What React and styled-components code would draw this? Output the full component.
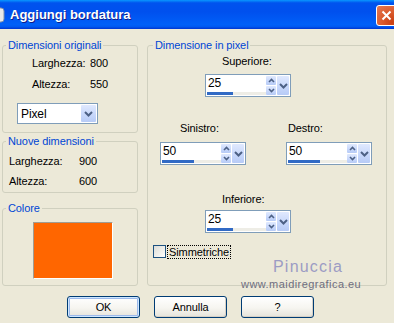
import React from 'react';
import styled, { createGlobalStyle } from 'styled-components';

const GlobalStyle = createGlobalStyle`
  html, body { margin: 0; padding: 0; }
  body {
    width: 394px;
    height: 323px;
    overflow: hidden;
    background: #ECE9D8;
    font-family: "Liberation Sans", Arial, sans-serif;
    font-size: 11px;
    letter-spacing: -0.1px;
    color: #000;
  }
`;

const Window = styled.div`
  width: 394px;
  height: 323px;
  display: flex;
  flex-direction: column;
  background: #ECE9D8;
  overflow: hidden;
`;

const TitleBar = styled.div`
  height: 29px;
  flex-shrink: 0;
  display: flex;
  align-items: center;
  background: linear-gradient(180deg, #0997FF 0%, #0053EE 10%, #0050EE 40%, #0060F8 85%, #0058F0 93%, #003DD7 97%, #003DD7 100%);
`;

const AppIcon = styled.svg`
  width: 16px;
  height: 16px;
  margin-left: -11px;
  margin-right: 5px;
  flex-shrink: 0;
`;

const Title = styled.span`
  flex: 1;
  color: #fff;
  font-family: "Liberation Sans", Arial, sans-serif;
  font-weight: bold;
  font-size: 13px;
  letter-spacing: 0;
  text-shadow: 1px 1px 0 #0F1C8A;
`;

const CloseButton = styled.div`
  width: 21px;
  height: 21px;
  margin-right: -3px;
  margin-top: 1px;
  box-sizing: border-box;
  border: 1px solid #fff;
  border-radius: 3px;
  background: radial-gradient(circle at 80% 85%, #C94013 0%, #DA5A2C 45%, #E67A55 100%);
  display: flex;
  align-items: center;
  justify-content: center;
  flex-shrink: 0;
`;

const Body = styled.div`
  flex: 1;
  position: relative;
  display: flex;
  flex-direction: column;
  padding: 10px 0 0 2px;
`;

const Columns = styled.div`
  display: flex;
  gap: 9px;
`;

const LeftColumn = styled.div`
  width: 136px;
  display: flex;
  flex-direction: column;
`;

const Group = styled.fieldset`
  margin: ${p => p.$top || 0}px 0 0 0;
  padding: 0;
  border: 1px solid #D0D0BF;
  border-radius: 3px;
  min-width: 0;
  box-sizing: border-box;
  width: ${p => p.$w}px;
`;

const GroupBody = styled.div`
  padding: ${p => p.$pad};
  display: flex;
  flex-direction: column;
  align-items: flex-start;
`;

const Legend = styled.legend`
  margin-left: ${p => p.$offset || 3}px;
  padding: 0 2px;
  color: #0046D5;
  font-size: 11px;
  line-height: 13px;
`;

const InfoRow = styled.div`
  display: grid;
  grid-template-columns: ${p => p.$col}px auto;
  height: ${p => p.$h}px;
  margin-left: ${p => p.$indent || 0}px;
  align-items: center;
`;

const Select = styled.div`
  width: 81px;
  height: 21px;
  box-sizing: border-box;
  margin: 9px 0 0 ${p => p.$left}px;
  border: 1px solid #7F9DB9;
  background: #fff;
  display: flex;
  align-items: center;
`;

const SelectText = styled.span`
  flex: 1;
  padding-left: 3px;
  font-size: 12px;
`;

const DropButton = styled.div`
  width: ${p => p.$w || 15}px;
  align-self: stretch;
  margin: 1px;
  border-radius: 1px;
  background: linear-gradient(180deg, #E0E9FE 0%, #C8D8FB 55%, #B7CBF6 100%);
  display: flex;
  align-items: center;
  justify-content: center;
`;

const Swatch = styled.div`
  width: 80px;
  height: 57px;
  box-sizing: border-box;
  margin: 7px 0 0 30px;
  background: #FF6600;
  border-top: 1px solid #A09C92;
  border-left: 1px solid #A09C92;
  border-right: 1px solid #fff;
  border-bottom: 1px solid #fff;
`;

const SpinRow = styled.div`
  display: flex;
  margin-top: ${p => p.$top}px;
`;

const SpinBlock = styled.div`
  display: flex;
  flex-direction: column;
  margin-left: ${p => p.$left}px;
`;

const SpinLabel = styled.span`
  line-height: 13px;
  padding-left: ${p => p.$indent}px;
  margin-bottom: ${p => p.$gap}px;
`;

const SpinField = styled.div`
  width: 86px;
  height: 23px;
  box-sizing: border-box;
  border: 1px solid #7F9DB9;
  background: #fff;
  display: flex;
`;

const Entry = styled.div`
  flex: 1;
  display: flex;
  flex-direction: column;
`;

const EntryValue = styled.span`
  flex: 1;
  padding-left: 2px;
  font-size: 12px;
  line-height: 17px;
`;

const Track = styled.div`
  height: 3px;
  margin: 0 0 1px 1px;
  background: #EEEDE6;
`;

const Fill = styled.div`
  height: 100%;
  background: #316AC5;
`;

const Spin = styled.div`
  width: 10px;
  margin: 1px 0 1px 0;
  display: flex;
  flex-direction: column;
  gap: 1px;
`;

const SpinHalf = styled.div`
  flex: 1;
  border-radius: 1px;
  background: linear-gradient(180deg, #E0E9FE 0%, #C8D8FB 55%, #B7CBF6 100%);
  display: flex;
  align-items: center;
  justify-content: center;
`;

const CheckRow = styled.div`
  display: flex;
  align-items: center;
  margin: 12px 0 0 5px;
`;

const CheckBox = styled.div`
  width: 13px;
  height: 13px;
  box-sizing: border-box;
  border: 1px solid #1C5180;
  background: linear-gradient(135deg, #DCDCD7 0%, #F4F4F0 70%, #fff 100%);
`;

const CheckLabel = styled.span`
  margin-left: 2px;
  padding: 0 1px;
  line-height: 12px;
  outline: 1px dotted #000;
`;

const ButtonRow = styled.div`
  display: flex;
  gap: 14px;
  margin-top: 10px;
  padding-left: 65px;
`;

const Button = styled.div`
  width: 73px;
  height: 22px;
  box-sizing: border-box;
  border: 1px solid #003C74;
  border-radius: 3px;
  background: linear-gradient(180deg, #FFFFFF 0%, #F6F5F0 55%, #E5E3DA 100%);
  box-shadow: ${p => p.$default
    ? 'inset 0 0 0 1px #CEE7FF, inset 0 0 0 2px #9CB9EB'
    : 'inset -1px -1px 0 #D6D0C5'};
  display: flex;
  align-items: center;
  justify-content: center;
  font-size: 11px;
`;

const Watermark = styled.div`
  position: absolute;
  left: ${p => p.$x}px;
  top: ${p => p.$y}px;
  font-family: "Liberation Sans", Arial, sans-serif;
  font-size: ${p => p.$size}px;
  letter-spacing: ${p => p.$spacing}px;
  color: ${p => p.$color};
  line-height: 1;
  white-space: nowrap;
`;

const SmallChevron = ({ up }) => (
  <svg width="7" height="5" viewBox="0 0 7 5">
    <path d={up ? 'M1 4 L3.5 1.5 L6 4' : 'M1 1 L3.5 3.5 L6 1'} fill="none" stroke="#4D6185" strokeWidth="1.6" />
  </svg>
);

const DownChevron = () => (
  <svg width="9" height="6" viewBox="0 0 9 6">
    <path d="M1 1 L4.5 4.5 L8 1" fill="none" stroke="#4D6185" strokeWidth="2" />
  </svg>
);

const Spinner = ({ value, fill }) => (
  <SpinField>
    <Entry>
      <EntryValue>{value}</EntryValue>
      <Track><Fill style={{ width: fill }} /></Track>
    </Entry>
    <Spin>
      <SpinHalf><SmallChevron up /></SpinHalf>
      <SpinHalf><SmallChevron /></SpinHalf>
    </Spin>
    <DropButton $w={12}><DownChevron /></DropButton>
  </SpinField>
);

const SpinControl = ({ label, value, fill, left, indent, gap }) => (
  <SpinBlock $left={left}>
    <SpinLabel $indent={indent} $gap={gap}>{label}</SpinLabel>
    <Spinner value={value} fill={fill} />
  </SpinBlock>
);

export default function App() {
  return (
    <Window>
      <GlobalStyle />
      <TitleBar>
        <AppIcon viewBox="0 0 16 16">
          <rect x="1" y="1" width="14" height="14" rx="3" fill="#E8E8E8" stroke="#8090A8" />
        </AppIcon>
        <Title>Aggiungi bordatura</Title>
        <CloseButton>
          <svg width="11" height="11" viewBox="0 0 11 11">
            <path d="M1.5 1.5 L9.5 9.5 M9.5 1.5 L1.5 9.5" stroke="#fff" strokeWidth="2" />
          </svg>
        </CloseButton>
      </TitleBar>

      <Body>
        <Columns>
          <LeftColumn>
            <Group $w={136}>
              <Legend>Dimensioni originali</Legend>
              <GroupBody $pad="0 0 8px 0">
                <InfoRow $col={58} $h={21} $indent={29}><span>Larghezza:</span><span>800</span></InfoRow>
                <InfoRow $col={58} $h={21} $indent={29}><span>Altezza:</span><span>550</span></InfoRow>
                <Select $left={14}>
                  <SelectText>Pixel</SelectText>
                  <DropButton><DownChevron /></DropButton>
                </Select>
              </GroupBody>
            </Group>

            <Group $w={136} $top={2}>
              <Legend>Nuove dimensioni</Legend>
              <GroupBody $pad="3px 0 1px 6px">
                <InfoRow $col={70} $h={20}><span>Larghezza:</span><span>900</span></InfoRow>
                <InfoRow $col={70} $h={20}><span>Altezza:</span><span>600</span></InfoRow>
              </GroupBody>
            </Group>

            <Group $w={136} $top={9}>
              <Legend>Colore</Legend>
              <GroupBody $pad="0 0 6px 0">
                <Swatch />
              </GroupBody>
            </Group>
          </LeftColumn>

          <Group $w={240}>
            <Legend $offset={5}>Dimensione in pixel</Legend>
            <GroupBody $pad="3px 0 0 0">
              <SpinRow $top={0}>
                <SpinControl label="Superiore:" value="25" fill={26} left={57} indent={17} gap={6} />
              </SpinRow>
              <SpinRow $top={25}>
                <SpinControl label="Sinistro:" value="50" fill={32} left={12} indent={20} gap={7} />
                <SpinControl label="Destro:" value="50" fill={32} left={40} indent={2} gap={7} />
              </SpinRow>
              <SpinRow $top={28}>
                <SpinControl label="Inferiore:" value="25" fill={26} left={57} indent={17} gap={4} />
              </SpinRow>
              <CheckRow>
                <CheckBox />
                <CheckLabel>Simmetriche</CheckLabel>
              </CheckRow>
            </GroupBody>
          </Group>
        </Columns>

        <ButtonRow>
          <Button $default>OK</Button>
          <Button>Annulla</Button>
          <Button>?</Button>
        </ButtonRow>

        <Watermark $x={273} $y={230} $size={16} $spacing={1.2} $color="#9C9CC4">Pinuccia</Watermark>
        <Watermark $x={241} $y={250} $size={11} $spacing={0.45} $color="#6E6E80">www.maidiregrafica.eu</Watermark>
      </Body>
    </Window>
  );
}
